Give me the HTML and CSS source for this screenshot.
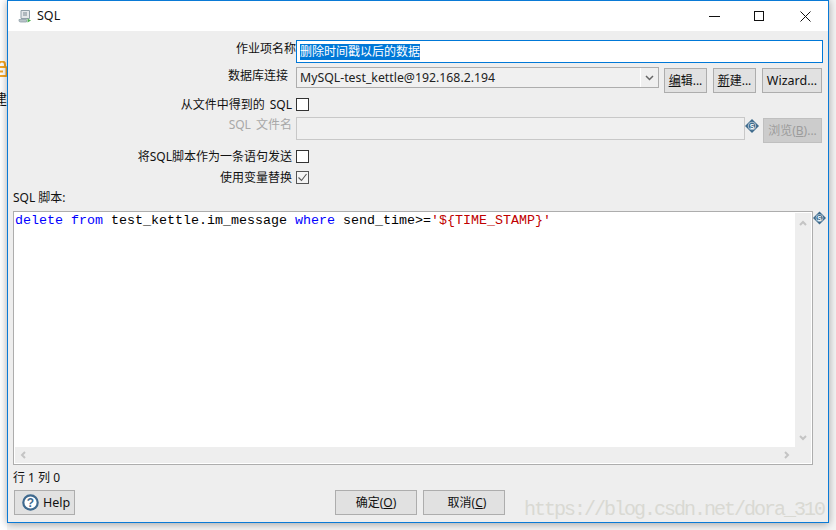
FILE: index.html
```html
<!DOCTYPE html>
<html lang="zh">
<head>
<meta charset="utf-8">
<title>SQL</title>
<link rel="stylesheet" href="styles.css">
</head>
<body>
<div class="desk">
  <div class="strip">
    <svg class="lock" width="8" height="16" viewBox="0 0 8 16"><path d="M-1 6V3.500a3 3 0 0 1 6 0V6" fill="none" stroke="#f5a623" stroke-width="2"/><rect x="-4" y="6" width="10.500" height="9" rx="1" fill="none" stroke="#f5a623" stroke-width="2"/><rect x="0" y="9.500" width="3" height="2" fill="#f5a623"/></svg>
    <div class="strip-char">建</div>
  </div>
  <div class="window">
    <div class="titlebar">
      <svg class="app-icon" width="14" height="14" viewBox="0 0 14 14"><path d="M3 1.500h8.500v8H3z" fill="#e4e8ea" stroke="#8fa0a8"/><path d="M1 10.500h7.500V13H2.500A1.500 1.500 0 0 1 1 11.500z" fill="#b9c4c9" stroke="#8fa0a8" stroke-width=".8"/><path d="M5 4h4M5 6h4" stroke="#7a8a92"/><path d="M9.500 9.500l3.500 2-3.500 2z" fill="#4caf50"/></svg>
      <span class="title">SQL</span>
      <div class="winctl">
        <svg width="46" height="20" viewBox="0 0 46 20"><path d="M7 10.500h11" stroke="#111"/></svg>
        <svg width="46" height="20" viewBox="0 0 46 20"><rect x="6.500" y="5.500" width="9" height="9" fill="none" stroke="#111"/></svg>
        <svg width="30" height="20" viewBox="0 0 30 20"><path d="M6.500 5.500l10 10M16.500 5.500l-10 10" stroke="#111" fill="none"/></svg>
      </div>
    </div>
    <div class="body">
      <div class="row row-name">
        <label class="lab lab-flush">作业项名称</label>
        <div class="field field-focus"><span class="sel">删除时间戳以后的数据</span></div>
      </div>
      <div class="row row-conn">
        <label class="lab lab-wide">数据库连接</label>
        <div class="combo">
          <span class="combo-text">MySQL-test_kettle@192.168.2.194</span>
          <span class="combo-arrow"><svg width="9" height="6" viewBox="0 0 9 6"><path d="M1 1l3.500 3.500L8 1" fill="none" stroke="#666" stroke-width="1.500"/></svg></span>
        </div>
        <button class="btn btn-edit"><u>编</u>辑...</button>
        <button class="btn btn-new"><u>新</u>建...</button>
        <button class="btn btn-wiz">Wizard...</button>
      </div>
      <div class="row row-check">
        <label class="lab lab-spaced">从文件中得到的 SQL</label>
        <span class="check"></span>
      </div>
      <div class="row row-file">
        <label class="lab lab-off lab-spaced">SQL 文件名</label>
        <div class="field field-off"></div>
        <svg class="var-icon" width="14" height="14" viewBox="0 0 14 14"><path d="M7 0l7 7-7 7-7-7z" fill="#3d6a8c"/><circle cx="7" cy="7" r="3.800" fill="#3d6a8c" stroke="#fff" stroke-width=".6"/><text x="7" y="10" class="var-s">S</text></svg>
        <button class="btn btn-browse" disabled>浏览(<u>B</u>)...</button>
      </div>
      <div class="row row-check row-send">
        <label class="lab">将SQL脚本作为一条语句发送</label>
        <span class="check"></span>
      </div>
      <div class="row row-check row-var">
        <label class="lab">使用变量替换</label>
        <span class="check"><svg width="11" height="11" viewBox="0 0 11 11"><path d="M1.500 5.500l3 3 5-6.500" fill="none" stroke="#555" stroke-width="1.100"/></svg></span>
      </div>
      <div class="script-label">SQL 脚本:</div>
      <div class="editor-row">
        <div class="editor">
          <div class="code"><span class="kw">delete</span> <span class="kw">from</span> test_kettle.im_message <span class="kw">where</span> send_time&gt;=<span class="str">'${TIME_STAMP}'</span></div>
          <div class="vbar">
            <svg width="8" height="6" viewBox="0 0 8 6"><path d="M1 5l3-3 3 3" fill="none" stroke="#c4c4c4" stroke-width="2"/></svg>
            <svg width="8" height="6" viewBox="0 0 8 6"><path d="M1 1l3 3 3-3" fill="none" stroke="#c4c4c4" stroke-width="2"/></svg>
          </div>
          <div class="hbar">
            <svg width="6" height="8" viewBox="0 0 6 8"><path d="M5 1L2 4l3 3" fill="none" stroke="#c4c4c4" stroke-width="2"/></svg>
            <svg width="6" height="8" viewBox="0 0 6 8"><path d="M1 1l3 3-3 3" fill="none" stroke="#c4c4c4" stroke-width="2"/></svg>
          </div>
          <div class="corner"></div>
        </div>
        <svg class="var-icon" width="13" height="14" viewBox="0 0 14 14"><path d="M7 0l7 7-7 7-7-7z" fill="#3d6a8c"/><circle cx="7" cy="7" r="3.800" fill="#3d6a8c" stroke="#fff" stroke-width=".6"/><text x="7" y="10" class="var-s">S</text></svg>
      </div>
      <div class="status">行 1 列 0</div>
      <div class="footer">
        <button class="btn btn-help">
          <svg width="17" height="17" viewBox="0 0 17 17"><circle cx="8.500" cy="8.500" r="7.200" fill="#fff" stroke="#3f6a8f" stroke-width="2.200"/><text x="8.500" y="12.500" class="help-q">?</text></svg>
          <span>Help</span>
        </button>
        <button class="btn btn-ok">确定(<u>O</u>)</button>
        <button class="btn btn-cancel">取消(<u>C</u>)</button>
      </div>
    </div>
    <div class="watermark">https://blog.csdn.net/dora_310</div>
  </div>
</div>
</body>
</html>
```
FILE: styles.css
```css
* { box-sizing: border-box; }
html, body { margin: 0; padding: 0; }
body {
  width: 836px;
  height: 530px;
  overflow: hidden;
  background: #f4f4f4;
  font: 12px/14px "Noto Sans", "Noto Sans CJK SC", sans-serif;
  color: #111;
}
.desk { display: flex; align-items: flex-start; }
.strip {
  width: 7px;
  height: 530px;
  flex: none;
  overflow: hidden;
  background: #fff;
  padding-top: 61px;
}
.lock { display: block; }
.strip-char {
  margin: 13px 0 0 -7px;
  width: 14px;
  font-size: 14px;
  line-height: 18px;
}
.window {
  position: relative;
  width: 822px;
  height: 523px;
  flex: none;
  border: 1px solid #0a7ad6;
  background: #eeeeee;
  box-shadow: 0 1px 8px rgba(0, 0, 0, .35);
}
.titlebar {
  height: 30px;
  background: #fff;
  display: flex;
  align-items: center;
  padding-left: 10px;
}
.app-icon { flex: none; }
.title { margin-left: 5px; font-size: 12.500px; color: #111; }
.winctl { margin-left: auto; margin-right: 4px; display: flex; }
.winctl svg { display: block; }

.body { padding-top: 9px; }
.row { display: flex; align-items: flex-start; }
.lab { width: 284px; flex: none; text-align: right; margin-right: 4px; }
.lab-flush { width: 288px; margin-right: 0; line-height: 18px; }
.lab-wide { width: 280px; margin-right: 8px; line-height: 18px; }
.lab-off { color: #a8a8a8; line-height: 16px; }
.lab-spaced { word-spacing: 2px; }

.row-name { height: 23px; }
.field { height: 23px; border: 1px solid #c8c8c8; background: #f0f0f0; }
.field-focus {
  width: 527px;
  border-color: #0078d7;
  background: #fff;
  padding: 3px;
  line-height: 16px;
}
.sel { display: inline-block; background: #0078d7; color: #fff; height: 16px; }
.field-off { width: 449px; }

.row-conn { height: 26px; margin-top: 4px; }
.combo {
  width: 363px;
  height: 21px;
  border: 1px solid #adadad;
  background: #f0f0f0;
  display: flex;
  align-items: center;
  justify-content: space-between;
  margin-right: 5px;
}
.combo-text { padding-left: 3px; font-size: 12.300px; color: #222; }
.combo-arrow {
  width: 18px;
  height: 19px;
  background: #efefef;
  border-left: 1px solid #fff;
  display: flex;
  align-items: center;
  justify-content: center;
}
.btn {
  height: 25px;
  border: 1px solid #adadad;
  background: #e1e1e1;
  font: inherit;
  color: #111;
  padding: 0;
  margin-top: 1px;
}
.btn-edit, .btn-new { width: 43px; margin-right: 6px; }
.btn-wiz { width: 60px; font-size: 12.500px; }
.btn-browse {
  width: 59px;
  margin-left: 4px;
  background: #cccccc;
  border-color: #bfbfbf;
  color: #9c9c9c;
}

.row-check { height: 13px; margin-top: 5px; line-height: 13px; }
.check {
  width: 13px;
  height: 13px;
  border: 1px solid #333;
  background: #fff;
  display: block;
}
.check svg { display: block; }
.row-var .check { border-color: #555; background: #f4f4f4; }

.row-file { height: 26px; margin-top: 6px; }
.row-file .var-icon { margin-top: 2px; flex: none; }
.var-s { font: bold 7px "Liberation Sans", sans-serif; fill: #fff; text-anchor: middle; }

.row-send { margin-top: 7px; }
.row-var { margin-top: 8px; }

.script-label { margin: 7px 0 6px 5px; }
.editor-row { display: flex; align-items: flex-start; padding-left: 5px; }
.editor {
  width: 800px;
  height: 254px;
  flex: none;
  border: 1px solid #adadad;
  padding: 1px;
  background: #fff;
  display: grid;
  grid-template-columns: 1fr 16px;
  grid-template-rows: 1fr 16px;
}
.code {
  font: 13.333px/14px "Liberation Mono", monospace;
  color: #000;
  padding-top: 1px;
  white-space: pre;
}
.kw { color: #0000ff; }
.str { color: #c00000; }
.vbar {
  background: #eeeeee;
  display: flex;
  flex-direction: column;
  justify-content: space-between;
  align-items: center;
  padding: 7px 0 6px;
}
.hbar {
  background: #eeeeee;
  display: flex;
  justify-content: space-between;
  align-items: center;
  padding: 0 5px;
}
.corner { background: #eeeeee; }
.vbar svg, .hbar svg { display: block; }

.status { margin: 6px 0 0 5px; height: 14px; }
.footer { display: flex; align-items: flex-start; padding-left: 6px; margin-top: 5px; }
.btn-help {
  width: 61px;
  margin: 0;
  display: flex;
  align-items: center;
  padding-left: 7px;
  gap: 4px;
  font-size: 12.500px;
}
.btn-help svg { flex: none; }
.help-q { font: bold 12px "Liberation Sans", sans-serif; fill: #3f6a8f; text-anchor: middle; }
.btn-ok { width: 82px; margin: 0 6px 0 260px; }
.btn-cancel { width: 82px; margin: 0; padding-left: 6px; }

.watermark {
  position: absolute;
  left: 516px;
  top: 496px;
  font: 20px/26px "Liberation Mono", monospace;
  letter-spacing: -2px;
  color: #d9d9d3;
  white-space: nowrap;
  pointer-events: none;
}
```
